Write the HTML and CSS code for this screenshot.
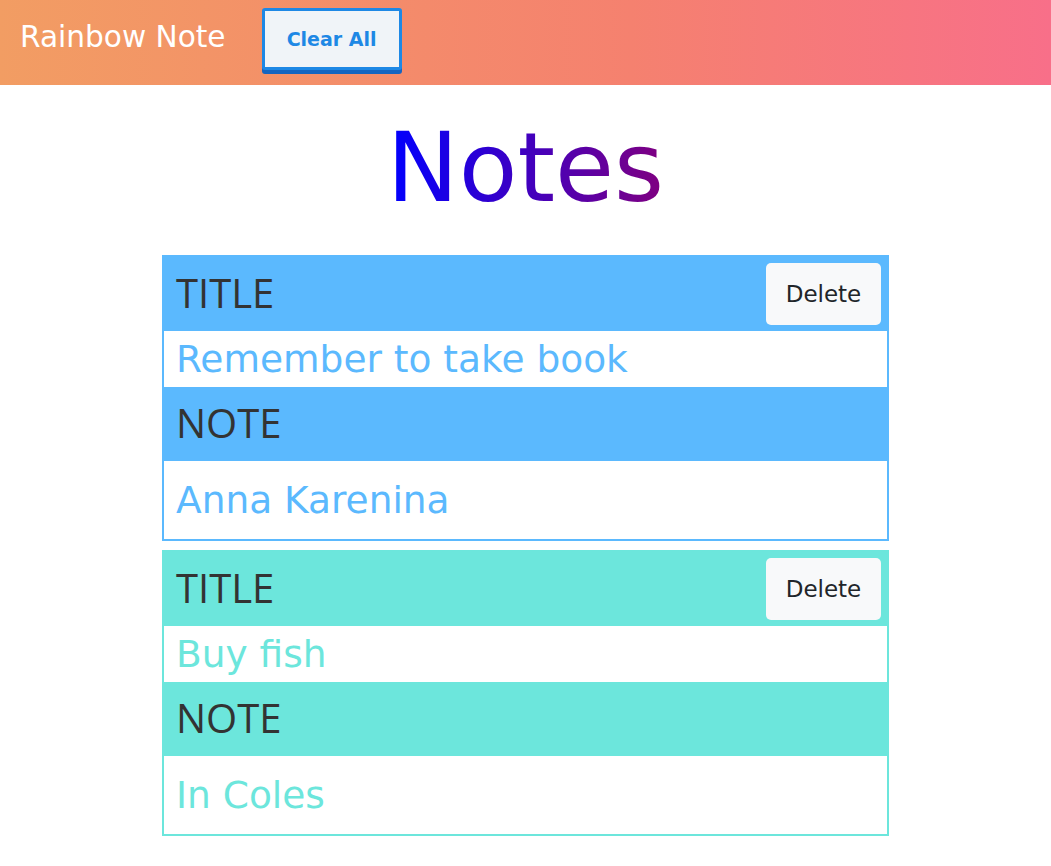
FILE: index.html
```html
<!DOCTYPE html>
<html lang="en">
<head>
<meta charset="utf-8">
<title>Rainbow Note</title>
<link rel="stylesheet" href="styles.css">
</head>
<body>
<header class="topbar">
  <span class="brand">Rainbow Note</span>
  <button class="clear-btn">Clear All</button>
</header>
<main class="main">
  <h1 class="page-title">Notes</h1>
  <section class="note note-blue">
    <div class="note-band">
      <span class="band-label">TITLE</span>
      <button class="delete-btn">Delete</button>
    </div>
    <div class="note-row row-title">Remember to take book</div>
    <div class="note-band">
      <span class="band-label">NOTE</span>
    </div>
    <div class="note-row row-body">Anna Karenina</div>
  </section>
  <section class="note note-teal">
    <div class="note-band">
      <span class="band-label">TITLE</span>
      <button class="delete-btn">Delete</button>
    </div>
    <div class="note-row row-title">Buy fish</div>
    <div class="note-band">
      <span class="band-label">NOTE</span>
    </div>
    <div class="note-row row-body">In Coles</div>
  </section>
</main>
</body>
</html>
```
FILE: styles.css
```css
html, body {
  margin: 0;
  padding: 0;
  background: #ffffff;
}

body {
  font-family: "DejaVu Sans", "Liberation Sans", sans-serif;
}

.topbar {
  height: 85px;
  box-sizing: border-box;
  padding: 8px 0 0 20px;
  display: flex;
  align-items: flex-start;
  gap: 36px;
  background: linear-gradient(to right, #f29d63, #f5816f 60%, #f86f89);
}

.brand {
  color: #ffffff;
  font-size: 29.6px;
  line-height: 58px;
  white-space: nowrap;
}

.clear-btn {
  width: 140px;
  height: 62px;
  box-sizing: border-box;
  border: 3px solid #1e88e5;
  border-radius: 3px;
  background: #f0f4f8;
  box-shadow: 0 4px 0 #1565c0;
  color: #1e88e5;
  font-family: "DejaVu Sans", sans-serif;
  font-weight: bold;
  font-size: 19px;
  padding: 0;
  cursor: pointer;
}

.main {
  display: flex;
  flex-direction: column;
  align-items: center;
}

.page-title {
  margin: 27px 0 31px;
  font-weight: normal;
  font-size: 96px;
  line-height: normal;
  background: linear-gradient(to right, #0000ff, #800080);
  -webkit-background-clip: text;
  background-clip: text;
  color: transparent;
}

.note {
  width: 727px;
  box-sizing: border-box;
  border: 2px solid var(--c);
  margin-bottom: 9px;
  color: var(--c);
}

.note-blue { --c: #5bb9fe; }
.note-teal { --c: #6ce6dc; }

.note-band {
  height: 74px;
  box-sizing: border-box;
  background: var(--c);
  display: flex;
  align-items: center;
  justify-content: space-between;
  padding: 0 6px 4px 12px;
}

.band-label {
  font-family: "Open Sans", sans-serif;
  font-size: 40px;
  color: #333333;
}

.delete-btn {
  width: 115px;
  height: 62px;
  margin-bottom: -4px;
  border: none;
  border-radius: 5px;
  background: #f8f9fa;
  color: #212529;
  font-family: "DejaVu Sans", sans-serif;
  font-size: 23px;
  padding: 0;
  cursor: pointer;
}

.note-row {
  padding-left: 12px;
  font-size: 37.5px;
  white-space: nowrap;
}

.row-title {
  height: 56px;
  line-height: 56px;
}

.row-body {
  height: 78px;
  line-height: 78px;
}
```
